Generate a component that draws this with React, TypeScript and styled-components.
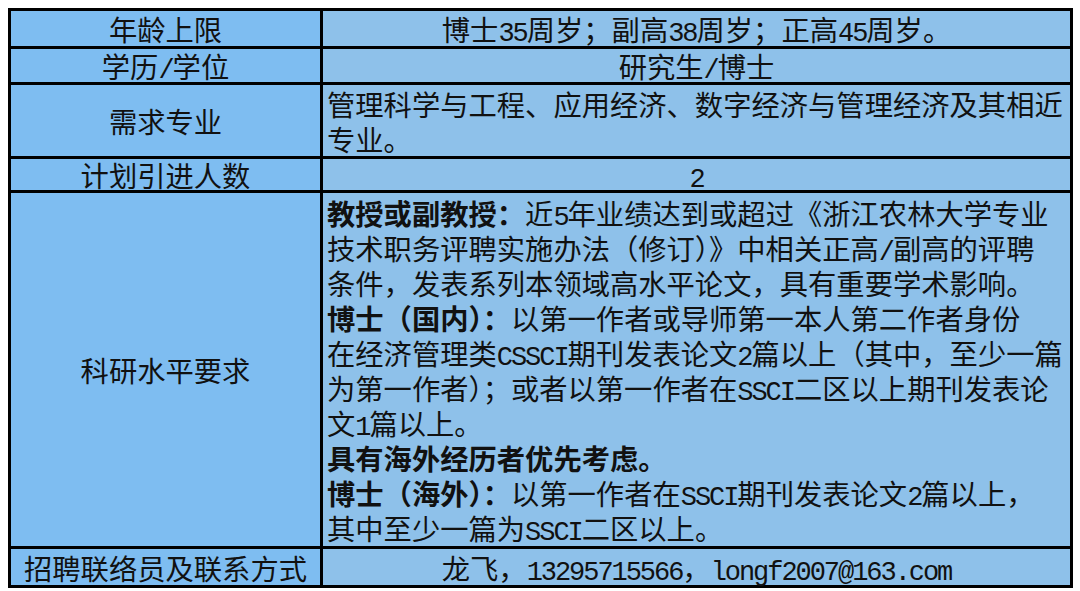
import React from "react";
import styled, { createGlobalStyle } from "styled-components";

const GlobalStyle = createGlobalStyle`
  html, body {
    margin: 0;
    padding: 0;
    background: #ffffff;
  }
  body {
    font-family: "Noto Sans CJK SC", "Liberation Serif", serif;
    color: #111111;
  }
`;

const Page = styled.div`
  padding: 8px 0 0 8px;
  width: 1080px;
  height: 591px;
  box-sizing: border-box;
`;

const Table = styled.div`
  display: grid;
  grid-template-columns: 309px 747px;
  grid-template-rows: 35px 33px 71px 31px 353px 36px;
  gap: 3px;
  padding: 3px;
  background: #000000;
  width: max-content;
`;

const Cell = styled.div`
  display: flex;
  flex-direction: column;
  justify-content: center;
  font-size: 28.3px;
  font-weight: 400;
`;

const LabelCell = styled(Cell)`
  background: #7ebdf1;
  align-items: center;
  text-align: center;
`;

const ValueCell = styled(Cell)<{ $align?: "center" | "left" }>`
  background: #8ec1ea;
  align-items: ${(p) => (p.$align === "left" ? "flex-start" : "center")};
  padding-left: ${(p) => (p.$align === "left" ? "4px" : "0")};
`;

const Line = styled.div`
  white-space: nowrap;
  height: 35px;
  line-height: 35px;
  flex: none;
`;

const Strong = styled.span`
  font-weight: 700;
`;

const Half = styled.span`
  font-family: "Liberation Mono", monospace;
  font-size: 27px;
  line-height: 10px;
  letter-spacing: -2.05px;
`;

function T({ text }: { text: string }) {
  const parts = text.split(/([\x21-\x7e]+)/);
  return (
    <>
      {parts.map((p, i) =>
        /^[\x21-\x7e]+$/.test(p) ? <Half key={i}>{p}</Half> : <React.Fragment key={i}>{p}</React.Fragment>
      )}
    </>
  );
}

type Seg = { b?: boolean; t: string };

const researchLines: Seg[][] = [
  [{ b: true, t: "教授或副教授：" }, { t: "近5年业绩达到或超过《浙江农林大学专业" }],
  [{ t: "技术职务评聘实施办法（修订）》中相关正高/副高的评聘" }],
  [{ t: "条件，发表系列本领域高水平论文，具有重要学术影响。" }],
  [{ b: true, t: "博士（国内）：" }, { t: "以第一作者或导师第一本人第二作者身份" }],
  [{ t: "在经济管理类CSSCI期刊发表论文2篇以上（其中，至少一篇" }],
  [{ t: "为第一作者）；或者以第一作者在SSCI二区以上期刊发表论" }],
  [{ t: "文1篇以上。" }],
  [{ b: true, t: "具有海外经历者优先考虑。" }],
  [{ b: true, t: "博士（海外）：" }, { t: "以第一作者在SSCI期刊发表论文2篇以上，" }],
  [{ t: "其中至少一篇为SSCI二区以上。" }],
];

function Lines({ lines }: { lines: Seg[][] }) {
  return (
    <>
      {lines.map((segs, i) => (
        <Line key={i}>
          {segs.map((s, j) =>
            s.b ? (
              <Strong key={j}>
                <T text={s.t} />
              </Strong>
            ) : (
              <T key={j} text={s.t} />
            )
          )}
        </Line>
      ))}
    </>
  );
}

function One({ text }: { text: string }) {
  return (
    <Line>
      <T text={text} />
    </Line>
  );
}

export default function App() {
  return (
    <Page>
      <GlobalStyle />
      <Table>
        <LabelCell>
          <One text="年龄上限" />
        </LabelCell>
        <ValueCell>
          <One text="博士35周岁；副高38周岁；正高45周岁。" />
        </ValueCell>

        <LabelCell>
          <One text="学历/学位" />
        </LabelCell>
        <ValueCell>
          <One text="研究生/博士" />
        </ValueCell>

        <LabelCell>
          <One text="需求专业" />
        </LabelCell>
        <ValueCell $align="left">
          <Lines
            lines={[
              [{ t: "管理科学与工程、应用经济、数字经济与管理经济及其相近" }],
              [{ t: "专业。" }],
            ]}
          />
        </ValueCell>

        <LabelCell>
          <One text="计划引进人数" />
        </LabelCell>
        <ValueCell>
          <One text="2" />
        </ValueCell>

        <LabelCell>
          <One text="科研水平要求" />
        </LabelCell>
        <ValueCell $align="left">
          <Lines lines={researchLines} />
        </ValueCell>

        <LabelCell>
          <One text="招聘联络员及联系方式" />
        </LabelCell>
        <ValueCell>
          <One text="龙飞，13295715566，longf2007@163.com" />
        </ValueCell>
      </Table>
    </Page>
  );
}
